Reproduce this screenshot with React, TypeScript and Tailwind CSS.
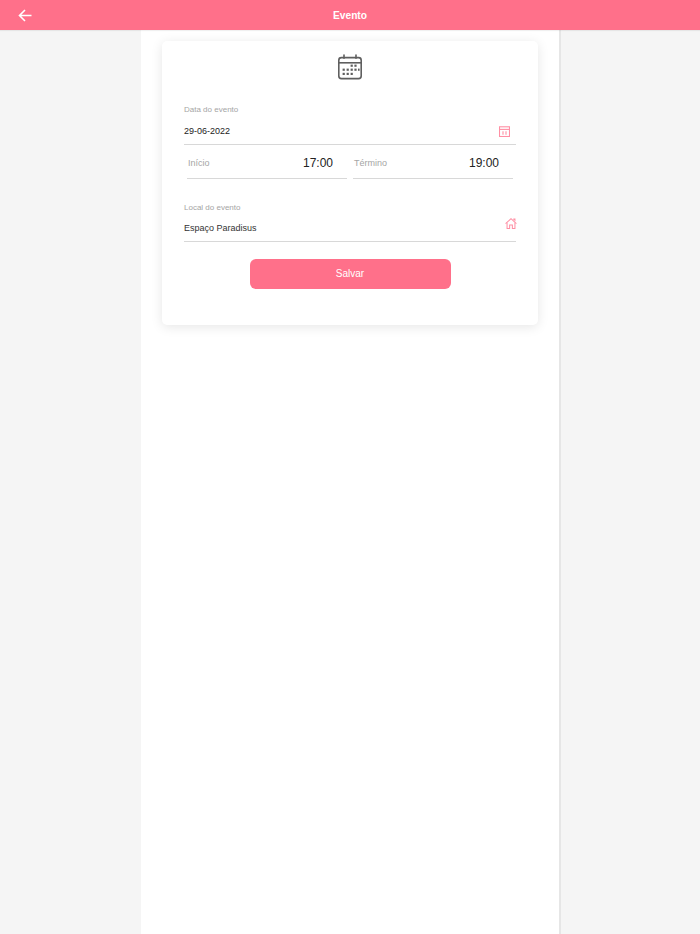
function CalendarBig() {
    return (
        <svg width="26" height="26" viewBox="0 0 26 26" fill="none" stroke="#5f5f5f" strokeWidth="1.6">
            <rect x="1.8" y="3.6" width="22.4" height="21" rx="2.6" />
            <path d="M1.8 8.8h22.4" />
            <path d="M7 1v3.2M19 1v3.2" strokeLinecap="round" />
            <g fill="#5f5f5f" stroke="none">
                <rect x="13.6" y="10.6" width="2.2" height="2.2" />
                <rect x="17.4" y="10.6" width="2.2" height="2.2" />
                <rect x="5.6" y="14.6" width="2.2" height="2.2" />
                <rect x="9.6" y="14.6" width="2.2" height="2.2" />
                <rect x="13.6" y="14.6" width="2.2" height="2.2" />
                <rect x="17.4" y="14.6" width="2.2" height="2.2" />
                <rect x="21" y="14.6" width="1.6" height="2.2" />
                <rect x="5.6" y="18.8" width="2.2" height="2.2" />
                <rect x="9.6" y="18.8" width="2.2" height="2.2" />
                <rect x="13.6" y="18.8" width="2.2" height="2.2" />
            </g>
        </svg>
    );
}

function CalendarSmall() {
    return (
        <svg width="11" height="11" viewBox="0 0 11 11" fill="none" stroke="#ff8fa4" strokeWidth="1.1">
            <rect x="0.5" y="0.8" width="10" height="9.7" />
            <path d="M0.5 3.4h10" />
            <path d="M4 5.2v3.6M7 5.2v3.6" />
        </svg>
    );
}

function HomeIcon() {
    return (
        <svg width="12" height="11" viewBox="0 0 13 12" fill="none" stroke="#ff8fa4" strokeWidth="1.1">
            <path d="M0.6 6.2 6.5 0.8l5.9 5.4" />
            <path d="M2.2 5.2v6.3h2.8V7.6h3v3.9h2.8V5.2" />
            <path d="M9.6 2.2V1h1.2v2.6" />
        </svg>
    );
}

function TimeField({label, value}: {label: string, value: string}) {
    return (
        <div className="w-[160px] h-[34px] border-b border-[#d8d8d8] flex items-center justify-between pl-px pr-[14px]">
            <span className="text-[9px] text-[#a5a5a5] mt-[5px]">{label}</span>
            <span className="text-[12px] text-[#222222] mt-[3px]">{value}</span>
        </div>
    );
}

export default function App() {
    return (
        <div className="min-h-[934px] bg-[#f5f5f5] font-['Liberation_Sans',Arial,sans-serif] flex flex-col">
            <header className="h-[30px] bg-[#ff708a] shadow-[0_1px_1px_rgba(0,0,0,0.06)] relative flex items-center justify-center shrink-0 z-10">
                <svg className="absolute left-[18px] top-[9px]" width="14" height="13" viewBox="0 0 14 13" fill="none" stroke="#ffffff" strokeWidth="1.6">
                    <path d="M13.5 6.5H1.5M7 1 1.5 6.5 7 12" />
                </svg>
                <h1 className="text-[10.2px] font-bold text-white mt-px">Evento</h1>
            </header>
            <main className="w-[420px] ml-[141px] grow bg-white border-r-2 border-[#e6e6e6] pt-[11px] pl-[21px]">
                <div className="w-[376px] h-[284px] bg-white rounded-[5px] shadow-[0_2px_12px_rgba(0,0,0,0.1)] px-[22px] pt-[13px]">
                    <div className="flex justify-center">
                        <CalendarBig />
                    </div>
                    <div className="mt-[25px] text-[8px] leading-[10px] text-[#a5a5a5]">Data do evento</div>
                    <div className="h-[30px] border-b border-[#d8d8d8] flex items-center justify-between pr-[6px] text-[9px] text-[#222222]">
                        <span className="mt-[4px]">29-06-2022</span>
                        <span className="mt-[3px]"><CalendarSmall /></span>
                    </div>
                    <div className="flex justify-between px-[3px]">
                        <TimeField label="Início" value="17:00" />
                        <TimeField label="Término" value="19:00" />
                    </div>
                    <div className="mt-[24px] text-[8px] leading-[10px] text-[#a5a5a5]">Local do evento</div>
                    <div className="h-[29px] border-b border-[#d8d8d8] flex items-center justify-between text-[9px] text-[#333333]">
                        <span className="mt-[3px]">Espaço Paradisus</span>
                        <span className="-mt-[8px] -mr-px"><HomeIcon /></span>
                    </div>
                    <button type="button" className="block mx-auto mt-[17px] w-[201px] h-[30px] pb-px rounded-[6px] bg-[#ff708a] text-[10px] text-white">Salvar</button>
                </div>
            </main>
        </div>
    );
}
